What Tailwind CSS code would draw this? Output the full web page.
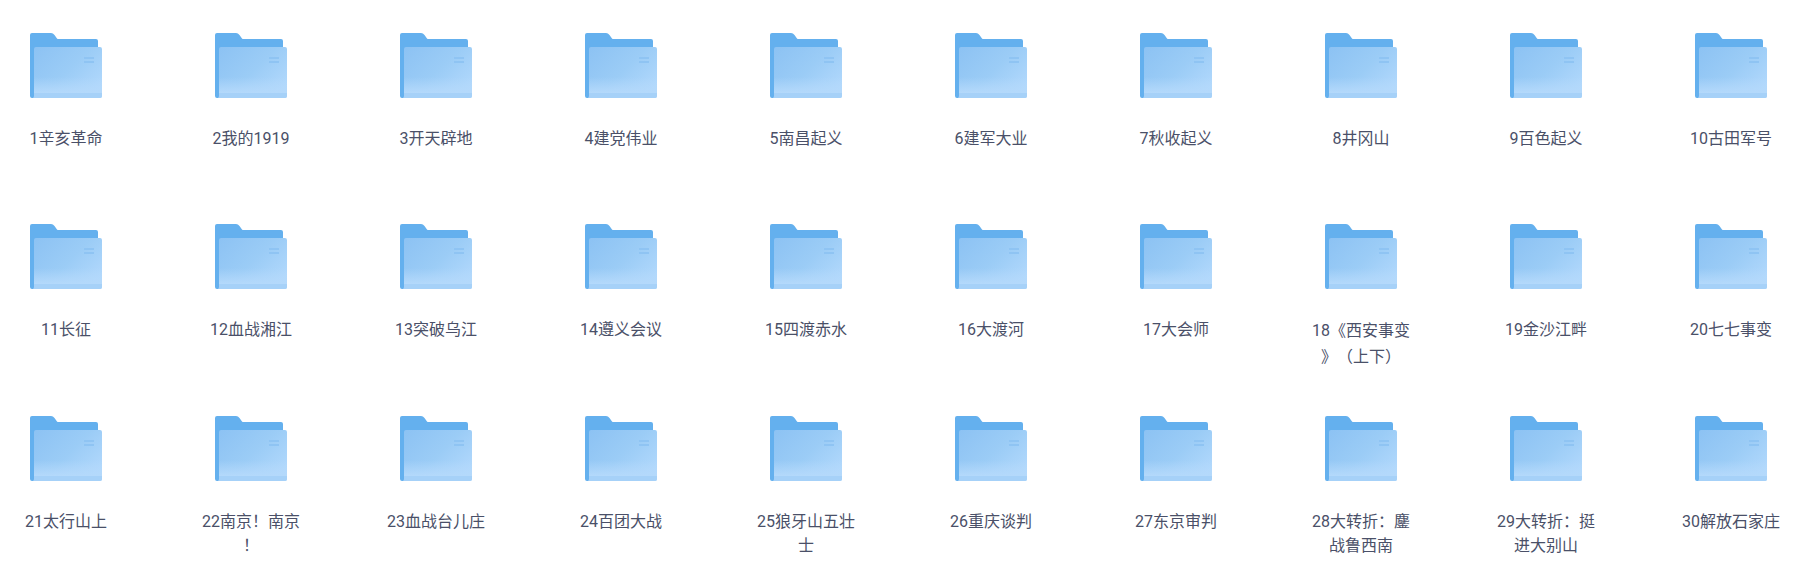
<!DOCTYPE html>
<html lang="zh-CN">
<head>
    <meta charset="UTF-8">
    <title>文件夹</title>
    <script src="https://cdn.jsdelivr.net/npm/@tailwindcss/browser@4"></script>
</head>
<body class="bg-white overflow-hidden">
    <svg width="0" height="0" class="absolute">
        <defs>
            <linearGradient id="front" x1="0" y1="0" x2="1" y2="0.75">
                <stop offset="0" stop-color="#8cc2f3"/>
                <stop offset="0.55" stop-color="#9bccf6"/>
                <stop offset="1" stop-color="#b1d8fc"/>
            </linearGradient>
            <linearGradient id="shine" x1="0" y1="0" x2="0" y2="1">
                <stop offset="0" stop-color="#b4d9fb" stop-opacity="0"/>
                <stop offset="1" stop-color="#b4d9fb" stop-opacity="1"/>
            </linearGradient>
            <symbol id="folder" viewBox="0 0 72 66">
                <path d="M2 0H21Q23 0 24.500 2L27 5.500Q27.500 6 28.500 6H66Q68 6 68 8V65H2Q0 65 0 63V2Q0 0 2 0Z" fill="#64b0ee"/>
                <path d="M6 14H70Q72 14 72 16V63Q72 65 70 65H3Q4 65 4 63V16Q4 14 6 14Z" fill="url(#front)"/>
                <rect x="4" y="44" width="68" height="16" fill="url(#shine)"/>
                <path d="M4 60H72V63Q72 65 70 65H3Q4 65 4 63Z" fill="#a6d1f8"/>
                <rect x="54" y="24" width="10" height="2" fill="#8fc4f3"/>
                <rect x="54" y="28" width="10" height="2" fill="#8fc4f3"/>
            </symbol>
        </defs>
    </svg>

    <div id="grid" class="h-[565px] overflow-hidden grid grid-cols-[repeat(10,185px)] auto-rows-[191.500px] content-start pt-[32.750px] pl-[10px] font-['Roboto','Noto_Sans_CJK_SC',sans-serif] text-base leading-6 text-[#4a5068]"></div>

    <template id="cell">
        <div class="w-[112px] flex flex-col items-center">
            <svg class="w-[72px] h-[66px]"><use href="#folder"></use></svg>
            <p class="mt-[28px] w-full px-[6px] text-center [line-break:anywhere] [text-spacing-trim:space-all]"></p>
        </div>
    </template>

    <script>
        const names = [
            "1辛亥革命", "2我的1919", "3开天辟地", "4建党伟业", "5南昌起义",
            "6建军大业", "7秋收起义", "8井冈山", "9百色起义", "10古田军号",
            "11长征", "12血战湘江", "13突破乌江", "14遵义会议", "15四渡赤水",
            "16大渡河", "17大会师", "18《西安事变》（上下）", "19金沙江畔", "20七七事变",
            "21太行山上", "22南京！南京！", "23血战台儿庄", "24百团大战", "25狼牙山五壮士",
            "26重庆谈判", "27东京审判", "28大转折：鏖战鲁西南", "29大转折：挺进大别山", "30解放石家庄"
        ];
        const grid = document.getElementById("grid");
        const cell = document.getElementById("cell");
        names.forEach(function (name) {
            const item = cell.content.cloneNode(true);
            const label = item.querySelector("p");
            label.textContent = name;
            if (name.includes("《")) label.classList.add("leading-[26px]");
            grid.appendChild(item);
        });
    </script>
</body>
</html>
